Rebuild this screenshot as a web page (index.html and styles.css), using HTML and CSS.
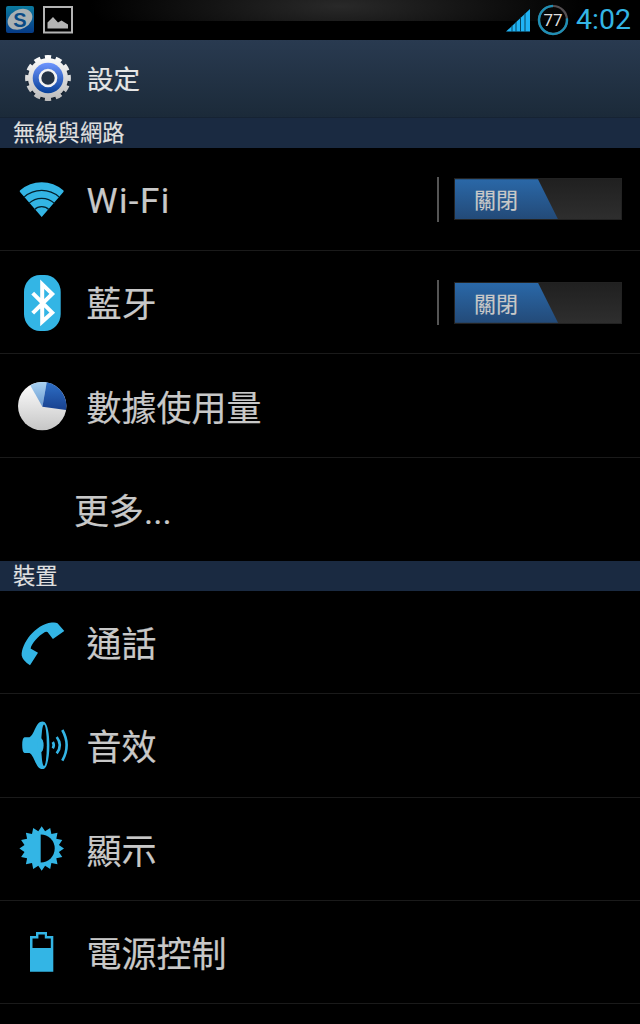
FILE: index.html
```html
<!DOCTYPE html>
<html lang="zh-Hant">
    <head>
        <meta charset="UTF-8" />
        <meta name="viewport" content="width=device-width, initial-scale=1.0" />
        <title>設定</title>
        <link rel="stylesheet" href="styles.css">
    </head>
    <body>
        <div class="status-bar">
            <svg class="app-icon" width="28" height="28" viewBox="0 0 28 28">
                <defs>
                    <linearGradient id="appBlue" x1="0" y1="0" x2="0" y2="1">
                        <stop offset="0" stop-color="#0b7a9f" />
                        <stop offset="1" stop-color="#063a86" />
                    </linearGradient>
                </defs>
                <rect width="28" height="27" rx="2" fill="url(#appBlue)" />
                <ellipse cx="14" cy="13.3" rx="13" ry="9.6" fill="#a9b1b3" transform="rotate(-28 14 13.3)" />
                <text class="app-letter" x="14" y="20.5" text-anchor="middle">S</text>
            </svg>
            <svg class="picture-icon" width="30" height="28" viewBox="0 0 30 28">
                <rect x="1" y="1" width="28" height="25.5" fill="none" stroke="#b4b4b4" stroke-width="2" />
                <path d="M4.5 22.5v-6l5.5-5.5 5 5.5 3.5-2 6.5 4v4z" fill="#b4b4b4" />
            </svg>
            <div class="status-right">
                <svg class="signal" width="24" height="23" viewBox="0 0 24 23">
                    <path d="M0 22.5L24 0v22.5z" fill="#20b4f5" />
                    <path d="M6 16.6V23M10 13V23M14.5 8.6V23M19 4.4V23" stroke="#06455f" stroke-width="1" />
                </svg>
                <div class="battery-ring">
                    <svg width="32" height="32" viewBox="0 0 32 32">
                        <circle cx="16" cy="16" r="14" fill="none" stroke="#554f52" stroke-width="2.2" />
                        <circle cx="16" cy="16" r="14" fill="none" stroke="#1e8fb5" stroke-width="2.4"
                            pathLength="100" stroke-dasharray="77 23" transform="rotate(-7 16 16)" />
                    </svg>
                    <span>77</span>
                </div>
                <span class="clock">4:02</span>
            </div>
        </div>

        <div class="title-bar">
            <svg width="50" height="50" viewBox="0 0 50 50">
                <defs>
                    <linearGradient id="metal" gradientUnits="userSpaceOnUse" x1="0" y1="2" x2="0" y2="48">
                        <stop offset="0" stop-color="#ffffff" />
                        <stop offset="1" stop-color="#b9b9b9" />
                    </linearGradient>
                    <linearGradient id="gearBlue" x1="0" y1="0" x2="0" y2="1">
                        <stop offset="0" stop-color="#7096ff" />
                        <stop offset="1" stop-color="#063f98" />
                    </linearGradient>
                </defs>
                <circle cx="25" cy="26.5" r="21" fill="#101a26" opacity="0.6" />
                <circle cx="25" cy="25" r="20" fill="url(#metal)" />
                <circle cx="25" cy="25" r="20.4" fill="none" stroke="url(#metal)" stroke-width="5"
                    pathLength="120" stroke-dasharray="5.8 4.2" stroke-dashoffset="2.9" />
                <circle cx="25" cy="25" r="15.3" fill="url(#gearBlue)" />
                <circle cx="25" cy="25" r="8" fill="#233244" stroke="#f2f2f2" stroke-width="2.6" />
            </svg>
            <h1>設定</h1>
        </div>

        <h2 class="section">無線與網路</h2>
        <div class="row">
            <svg class="icon" viewBox="0 0 48 56">
                <path d="M23.7 46L2 21Q1.2 20 2.2 19.2Q11.5 11.2 23.7 11.2T45.2 19.2Q46.2 20 45.4 21z" />
                <g fill="none" stroke="#04202c" stroke-width="1.2">
                    <path d="M6.2 26A26.3 26.3 0 0 1 41.2 26" />
                    <path d="M10.9 32.4A18.6 18.6 0 0 1 36.5 32.4" />
                    <path d="M16.3 38.7A10.6 10.6 0 0 1 31.1 38.7" />
                </g>
            </svg>
            <span class="label latin">Wi-Fi</span>
            <div class="toggle-area">
                <div class="toggle"><span>關閉</span></div>
            </div>
        </div>
        <div class="row">
            <svg class="icon" viewBox="0 0 48 56">
                <rect x="6" y="1" width="36.7" height="56" rx="16" ry="17" />
                <path d="M14.7 19.2L34.2 38.6L24.2 47.8V10.2L34.2 19.9L14.7 39.2" fill="none" stroke="#fff" stroke-width="4" />
            </svg>
            <span class="label">藍牙</span>
            <div class="toggle-area">
                <div class="toggle"><span>關閉</span></div>
            </div>
        </div>
        <div class="row">
            <svg class="icon" viewBox="0 0 48 56">
                <defs>
                    <linearGradient id="pieWhite" x1="0" y1="0" x2="0" y2="1">
                        <stop offset="0" stop-color="#ffffff" />
                        <stop offset="1" stop-color="#c6c6c6" />
                    </linearGradient>
                    <linearGradient id="pieDark" x1="0" y1="0" x2="0" y2="1">
                        <stop offset="0" stop-color="#2e6fc6" />
                        <stop offset="1" stop-color="#18418f" />
                    </linearGradient>
                    <linearGradient id="pieLight" x1="0" y1="0" x2="0" y2="1">
                        <stop offset="0" stop-color="#a9d2f2" />
                        <stop offset="1" stop-color="#6a9ad0" />
                    </linearGradient>
                </defs>
                <circle cx="24.2" cy="28.1" r="24.2" fill="url(#pieWhite)" />
                <path d="M24.4 28.8L12.2 7.2A24.2 24.2 0 0 1 28.7 4.3z" fill="url(#pieLight)" />
                <path d="M24.4 28.8L28.7 4.3A24.2 24.2 0 0 1 48.1 32z" fill="url(#pieDark)" />
            </svg>
            <span class="label">數據使用量</span>
        </div>
        <div class="row no-icon last">
            <span class="label">更多...</span>
        </div>

        <h2 class="section">裝置</h2>
        <div class="row">
            <svg class="icon" viewBox="0 0 48 56">
                <path d="M3.7 41.5C3.2 30 17 10.5 33.7 8.6Q37.5 8 39.5 9.2L46.3 17L34.9 25L29.5 18Q28.5 17.3 27 18C20 22 13.5 29.5 12.6 34.5L20 38.8L12 51.3Q4.5 46.5 3.7 41.5z" />
            </svg>
            <span class="label">通話</span>
        </div>
        <div class="row">
            <svg class="icon" viewBox="0 0 48 56">
                <path d="M6.5 20.2H11.5C16 17.5 17.5 7.5 22 4.9Q24.5 4 26.5 4.9C29.5 7 31.4 17 31.4 28.2S29.5 49.5 26.5 51.5Q24.5 52.5 22 51.5C17.5 49 16 38.5 11.5 36H6.5Q4.2 35.5 4.2 28.1T6.5 20.2z" />
                <ellipse cx="26" cy="28.2" rx="2.8" ry="20.8" fill="#000" />
                <ellipse cx="22.6" cy="28.2" rx="3" ry="7" />
                <g fill="none" stroke="#33b5e5" stroke-width="2.6">
                    <path d="M34.8 25Q36.8 28.2 34.8 31.4" />
                    <path d="M38.7 20Q45 28.2 38.7 36.4" />
                    <path d="M44.3 13Q53 28.2 44.3 43.7" />
                </g>
            </svg>
            <span class="label">音效</span>
        </div>
        <div class="row">
            <svg class="icon" viewBox="-23.7 -27.5 48 56">
                <path d="M22.3 0L17.2 3.4L20.6 8.5L14.6 9.7L15.8 15.8L9.7 14.6L8.5 20.6L3.4 17.2L0 22.3L-3.4 17.2L-8.5 20.6L-9.7 14.6L-15.8 15.8L-14.6 9.7L-20.6 8.5L-17.2 3.4L-22.3 0L-17.2 -3.4L-20.6 -8.5L-14.6 -9.7L-15.8 -15.8L-9.7 -14.6L-8.5 -20.6L-3.4 -17.2L0 -22.3L3.4 -17.2L8.5 -20.6L9.7 -14.6L15.8 -15.8L14.6 -9.7L20.6 -8.5L17.2 -3.4z" />
                <path d="M-1 -14A14 14 0 0 1 -1 14z" fill="#000" />
            </svg>
            <span class="label">顯示</span>
        </div>
        <div class="row">
            <svg class="icon" viewBox="0 0 48 56">
                <path fill-rule="evenodd" d="M12 12.1H18V8.1H29V12.1H35.3V47.8H12zM14.5 14.6V24H32.8V14.6H26.8V10.6H20.4V14.6z" />
            </svg>
            <span class="label">電源控制</span>
        </div>
    </body>
</html>
```
FILE: styles.css
```css
* {
    box-sizing: border-box;
}
body {
    margin: 0;
    height: 1024px;
    overflow: hidden;
    background-color: #000;
    color: #c8c8c8;
    font-family: Roboto, "Noto Sans CJK TC", sans-serif;
}
.status-bar {
    display: flex;
    align-items: center;
    height: 40px;
    padding: 0 9px 0 6px;
    /* Glossy highlight on the upper half */
    background: radial-gradient(ellipse 250px 50px at 340px 6px, #292929, transparent) 0 0 / 100% 21px no-repeat;
}
.picture-icon {
    margin-left: 9px;
}
.app-letter {
    font-family: "Liberation Sans", sans-serif;
    font-size: 20px;
    font-weight: bold;
    fill: #0a4b85;
}
.status-right {
    display: flex;
    align-items: center;
    margin-left: auto;
}
.battery-ring {
    display: grid;
    place-items: center;
    width: 32px;
    height: 32px;
    margin: 0 7px;
}
.battery-ring svg,
.battery-ring span {
    grid-area: 1 / 1;
}
.battery-ring span {
    color: #ddd;
    font-size: 17px;
}
.clock {
    color: #33b5e5;
    font-size: 28.5px;
    line-height: 40px;
}
.title-bar {
    display: flex;
    align-items: center;
    gap: 14px;
    height: 78px;
    padding: 0 0 2px 23px;
    border-bottom: 1px solid #162333;
    background: linear-gradient(#293a50, #1b2a39);
}
h1 {
    margin: -1px 0 0;
    color: #e6e6e6;
    font-size: 26.5px;
    font-weight: normal;
    -webkit-text-stroke: 0.2px;
}
.section {
    height: 29.6px;
    margin: 0;
    padding-left: 13px;
    background-color: #1a2a41;
    color: #e0e0e0;
    font-size: 22.3px;
    font-weight: normal;
    line-height: 31px;
    -webkit-text-stroke: 0.15px;
}
.row {
    display: flex;
    align-items: center;
    height: 103.4px;
    padding: 0 18px;
    border-bottom: 1px solid #1a1a1a;
}
.row.last {
    border-bottom: none;
}
.row.no-icon {
    padding-left: 74px;
}
.icon {
    width: 48px;
    height: 56px;
    margin-right: 20.5px;
    overflow: visible;
    fill: #33b5e5;
}
.label {
    padding-top: 8px;
    font-size: 35px;
    line-height: 50px;
    -webkit-text-stroke: 0.2px;
}
.label.latin {
    padding-top: 7px;
    letter-spacing: 1.4px;
}
.toggle-area {
    display: flex;
    align-items: center;
    height: 45px;
    margin: 1px 0 0 auto;
    padding-left: 15px;
    border-left: 2px solid #555;
}
.toggle {
    width: 168px;
    height: 42px;
    border: 1px solid #222;
    background: linear-gradient(#202020, #2e2e2e);
}
/* Slanted blue handle */
.toggle span {
    display: block;
    width: 103px;
    height: 40px;
    padding-left: 19px;
    background: linear-gradient(#2a68a8, #234a78);
    clip-path: polygon(0 0, 83px 0, 100% 100%, 0 100%);
    font-size: 22px;
    line-height: 43px;
    -webkit-text-stroke: 0.15px;
}
```
